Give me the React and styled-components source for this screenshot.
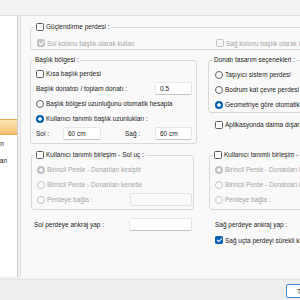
import React from "react";
import styled, { createGlobalStyle, css } from "styled-components";

const Global = createGlobalStyle`
  html, body { margin: 0; padding: 0; background: #f0f0f0; }
  body {
    font-family: "Liberation Sans", Arial, sans-serif;
    font-size: 6.5px;
    color: #1c1c1c;
  }
  * { box-sizing: border-box; }
`;

const Window = styled.div`
  width: 300px;
  height: 300px;
  overflow: hidden;
  display: flex;
  flex-direction: column;
  background: #f0f0f0;
`;

const TopBar = styled.div`
  flex: 0 0 16px;
  background: #f3f3f3;
  border-bottom: 1px solid #e1e1e1;
`;

const Body = styled.div`
  flex: 0 0 263px;
  display: flex;
  align-items: stretch;
`;

const Sidebar = styled.div`
  flex: 0 0 18px;
  margin-bottom: 2px;
  background: #fff;
  border-right: 1px solid #cdcdcd;
  overflow: hidden;
  padding-top: 103px;
`;

const SideItem = styled.div`
  height: 17px;
  display: flex;
  align-items: center;
  justify-content: flex-end;
  overflow: hidden;
  white-space: nowrap;
  color: #1a1a1a;
  padding-right: ${(p) => p.$trail}px;
  ${(p) =>
    p.$selected &&
    css`
      height: 16px;
      background: linear-gradient(#fde4b7, #f8c072);
      border: 1px solid #eaa94f;
      border-left: none;
      border-radius: 0 2px 2px 0;
    `}
`;

const Panel = styled.div`
  flex: 0 0 420px;
  margin: 0 0 1px 2px;
  background: #f9f9f9;
  border-left: 1px solid #e2e2e2;
  padding: 6px 0 0 9px;
`;

const Form = styled.div`
  display: grid;
  grid-template-columns: 167px 170px;
  column-gap: 11px;
  align-items: start;
`;

const Group = styled.fieldset`
  grid-column: ${(p) => (p.$span ? "1 / -1" : "auto")};
  margin: ${(p) => p.$m || "0"};
  padding: 0 ${(p) => p.$pr ?? 4}px ${(p) => p.$pb ?? 1}px ${(p) => p.$pl ?? 5}px;
  border: 1px solid #d9d9d9;
  border-radius: 3px;
  min-width: 0;
`;

const Legend = styled.legend`
  padding: 0 1px;
  margin-left: -2px;
  height: 10px;
  line-height: 10px;
  white-space: nowrap;
`;

const Rows = styled.div`
  padding-top: ${(p) => p.$pt ?? 0}px;
`;

const Pair = styled.div`
  display: grid;
  grid-template-columns: 179px 1fr;
  padding-top: 6px;
`;

const Column = styled.div`
  display: flex;
  flex-direction: column;
  grid-column: ${(p) => p.$col || "auto"};
`;

const Row = styled.div`
  display: flex;
  align-items: center;
  justify-content: ${(p) => (p.$between ? "space-between" : "flex-start")};
  height: ${(p) => p.$h || 15}px;
  margin-top: ${(p) => p.$mt || 0}px;
  padding-left: ${(p) => p.$indent || 0}px;
  padding-right: ${(p) => p.$end || 0}px;
  white-space: nowrap;
`;

const Option = styled.label`
  display: inline-flex;
  align-items: center;
  gap: 2px;
  height: 10px;
  vertical-align: top;
  color: ${(p) => (p.$disabled ? "#a5a5a5" : "#1c1c1c")};
`;

const FieldLabel = styled.span`
  flex: 0 0 ${(p) => p.$w}px;
  padding-left: ${(p) => p.$pl || 0}px;
`;

const TextBox = styled.input`
  width: ${(p) => p.$w}px;
  flex: 0 0 ${(p) => p.$w}px;
  height: 13px;
  margin: 0;
  padding: 0 4px;
  border: 1px solid #e6e6e6;
  border-bottom-color: #c4c4c4;
  border-radius: 2px;
  background: #fff;
  font: inherit;
  color: #1c1c1c;
  outline: none;
  &:disabled {
    background: #fafafa;
    border-color: #e3e3e3;
  }
`;

const Check = styled.input.attrs({ type: "checkbox" })`
  appearance: none;
  margin: 0;
  width: 8px;
  height: 8px;
  flex: 0 0 8px;
  border: 1px solid #5e5e5e;
  border-radius: 1.5px;
  background: #fcfcfc;
  position: relative;
  &:checked {
    background: #005fb8;
    border-color: #005fb8;
  }
  &:checked::after {
    content: "";
    position: absolute;
    left: 2px;
    top: 0px;
    width: 2px;
    height: 4px;
    border: solid #fff;
    border-width: 0 1px 1px 0;
    transform: rotate(45deg);
  }
  &:disabled {
    border-color: #c4c4c4;
    background: #f6f6f6;
  }
  &:disabled:checked {
    background: #c4c4c4;
    border-color: #c4c4c4;
  }
`;

const Radio = styled.input.attrs({ type: "radio" })`
  appearance: none;
  margin: 0;
  width: 8px;
  height: 8px;
  flex: 0 0 8px;
  border: 1px solid #636363;
  border-radius: 50%;
  background: #fcfcfc;
  &:checked {
    border: none;
    background: radial-gradient(circle, #fff 0 1.5px, #005fb8 2px);
  }
  &:disabled {
    border-color: #c6c6c6;
  }
  &:disabled:checked {
    border: none;
    background: radial-gradient(circle, #fafafa 0 1.5px, #c0c0c0 2px);
  }
`;

const Footer = styled.div`
  flex: 1;
  background: #eeeeee;
  border-top: 1px solid #e4e4e4;
  display: flex;
  align-items: flex-start;
  gap: 6px;
  padding: 4px 0 0 286px;
`;

const Button = styled.button`
  height: 14px;
  padding: 0 10px;
  font: inherit;
  background: #fff;
  border: 1px solid ${(p) => (p.$primary ? "#3f86d4" : "#d0d0d0")};
  border-radius: 2px;
  color: #1c1c1c;
  white-space: nowrap;
`;

function CheckOption({ label, checked, disabled }) {
  return (
    <Option $disabled={disabled}>
      <Check defaultChecked={checked} disabled={disabled} />
      {label}
    </Option>
  );
}

function RadioOption({ name, label, checked, disabled }) {
  return (
    <Option $disabled={disabled}>
      <Radio name={name} defaultChecked={checked} disabled={disabled} />
      {label}
    </Option>
  );
}

export default function App() {
  return (
    <>
      <Global />
      <Window>
        <TopBar />
        <Body>
          <Sidebar>
            <SideItem $selected $trail={40}>Perde ayarları</SideItem>
            <SideItem $trail={13}>Donatı detaylarının</SideItem>
            <SideItem $trail={10}>Çizim ayarları ve plan</SideItem>
          </Sidebar>
          <Panel>
            <Form>
              <Group $span $pl={6} $pb={1}>
                <Legend>
                  <CheckOption label="Güçlendirme perdesi :" />
                </Legend>
                <Pair>
                  <Row $h={10}>
                    <CheckOption label="Sol kolonu başlık olarak kullan" checked disabled />
                  </Row>
                  <Row $h={10}>
                    <CheckOption label="Sağ kolonu başlık olarak kullan" disabled />
                  </Row>
                </Pair>
              </Group>

              <Group $m="5px 0 0 0" $pl={5} $pr={4} $pb={2}>
                <Legend>Başlık bölgesi :</Legend>
                <Rows $pt={1}>
                  <Row>
                    <CheckOption label="Kısa başlık perdesi" />
                  </Row>
                  <Row $between>
                    <span>Başlık donatısı / toplam donatı :</span>
                    <TextBox $w={37} defaultValue="0.5" />
                  </Row>
                  <Row>
                    <RadioOption name="baslik" label="Başlık bölgesi uzunluğunu otomatik hesapla" />
                  </Row>
                  <Row>
                    <RadioOption name="baslik" label="Kullanıcı tanımlı başlık uzunlukları :" checked />
                  </Row>
                  <Row>
                    <FieldLabel $w={27}>Sol :</FieldLabel>
                    <TextBox $w={38} defaultValue="60 cm" />
                    <FieldLabel $w={54} $pl={24}>Sağ :</FieldLabel>
                    <TextBox $w={37} defaultValue="60 cm" />
                  </Row>
                </Rows>
              </Group>

              <Column>
                <Group $m="5px 0 0 0" $pl={6} $pb={0}>
                  <Legend>Donatı tasarım seçenekleri :</Legend>
                  <Rows $pt={2}>
                    <Row>
                      <RadioOption name="donati" label="Taşıyıcı sistem perdesi" />
                    </Row>
                    <Row>
                      <RadioOption name="donati" label="Bodrum kat çevre perdesi" />
                    </Row>
                    <Row>
                      <RadioOption name="donati" label="Geometriye göre otomatik belirle" checked />
                    </Row>
                  </Rows>
                </Group>
                <Row $mt={4} $indent={7}>
                  <CheckOption label="Aplikasyonda daima dışarıda göster" />
                </Row>
              </Column>

              <Group $m="6px 3px 0 1px" $pl={5} $pr={1} $pb={2}>
                <Legend>
                  <CheckOption label="Kullanıcı tanımlı birleşim - Sol uç :" />
                </Legend>
                <Rows $pt={2}>
                  <Row>
                    <RadioOption name="sol" label="Birincil Perde - Donatıları kesiştir" checked disabled />
                  </Row>
                  <Row>
                    <RadioOption name="sol" label="Birincil Perde - Donatıları kenetle" disabled />
                  </Row>
                  <Row $between>
                    <RadioOption name="sol" label="Perdeye bağla :" disabled />
                    <TextBox $w={62} disabled />
                  </Row>
                </Rows>
              </Group>

              <Group $m="6px 0 0 1px" $pl={5} $pr={4} $pb={2}>
                <Legend>
                  <CheckOption label="Kullanıcı tanımlı birleşim - Sağ uç :" />
                </Legend>
                <Rows $pt={2}>
                  <Row>
                    <RadioOption name="sag" label="Birincil Perde - Donatıları kesiştir" checked disabled />
                  </Row>
                  <Row>
                    <RadioOption name="sag" label="Birincil Perde - Donatıları kenetle" disabled />
                  </Row>
                  <Row $between>
                    <RadioOption name="sag" label="Perdeye bağla :" disabled />
                    <TextBox $w={62} disabled />
                  </Row>
                </Rows>
              </Group>

              <Row $between $h={14} $mt={7} $indent={4} $end={5}>
                <span>Sol perdeye ankraj yap :</span>
                <TextBox $w={63} />
              </Row>
              <Row $between $h={14} $mt={7} $indent={7} $end={5}>
                <span>Sağ perdeye ankraj yap :</span>
                <TextBox $w={63} />
              </Row>

              <Column $col="2">
                <Row $h={14} $mt={2} $indent={7}>
                  <CheckOption label="Sağ uçta perdeyi sürekli kabul et" checked />
                </Row>
              </Column>
            </Form>
          </Panel>
        </Body>
        <Footer>
          <Button $primary>Tamam</Button>
          <Button>İptal</Button>
        </Footer>
      </Window>
    </>
  );
}
